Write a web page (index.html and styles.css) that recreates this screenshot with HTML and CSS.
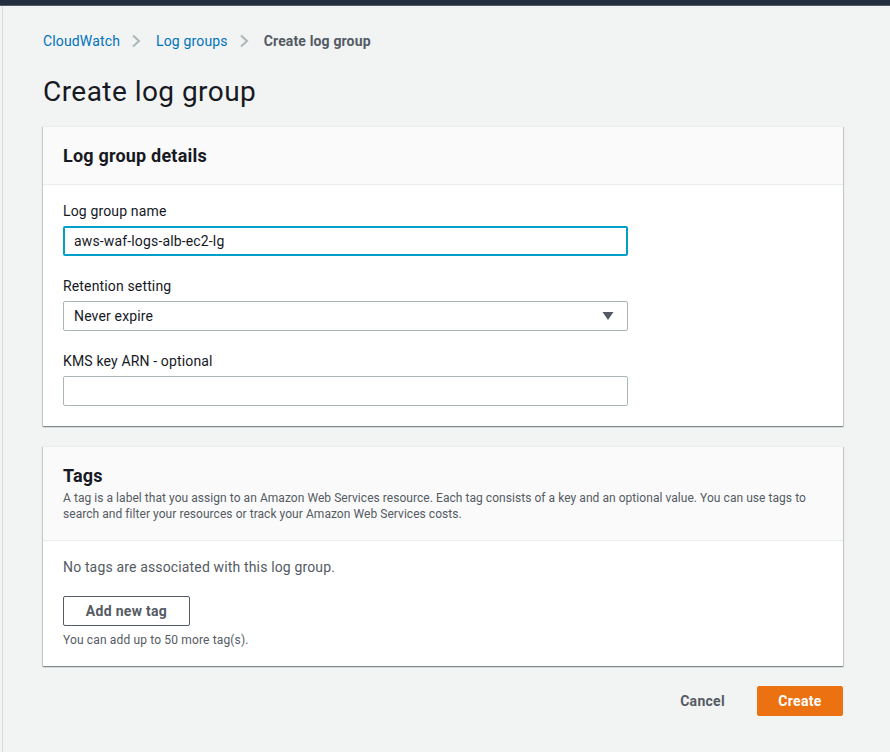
FILE: index.html
```html
<!DOCTYPE html>
<html lang="en">
<head>
<meta charset="utf-8">
<title>Create log group</title>
<link rel="stylesheet" href="styles.css">
</head>
<body>
<div class="topbar"></div>
<div class="page">
  <div class="content">
    <nav class="breadcrumbs">
      <a class="crumb" href="#">CloudWatch</a>
      <svg class="chev" width="10" height="14" viewBox="0 0 10 14"><path d="M2 1.5 L8 7 L2 12.5" fill="none" stroke="#aab7b8" stroke-width="2"/></svg>
      <a class="crumb" href="#">Log groups</a>
      <svg class="chev" width="10" height="14" viewBox="0 0 10 14"><path d="M2 1.5 L8 7 L2 12.5" fill="none" stroke="#aab7b8" stroke-width="2"/></svg>
      <span class="crumb current">Create log group</span>
    </nav>
    <h1 class="title">Create log group</h1>

    <section class="card">
      <div class="card-header">
        <h2 class="card-title">Log group details</h2>
      </div>
      <div class="card-body details">
        <div class="field">
          <label class="label">Log group name</label>
          <div class="input focused">aws-waf-logs-alb-ec2-lg</div>
        </div>
        <div class="field">
          <label class="label">Retention setting</label>
          <div class="input select">
            <span>Never expire</span>
            <svg class="caret" width="12" height="10" viewBox="0 0 12 10"><path d="M0.5 1 L11.5 1 L6 9 Z" fill="#545b64"/></svg>
          </div>
        </div>
        <div class="field">
          <label class="label">KMS key ARN - optional</label>
          <div class="input"></div>
        </div>
      </div>
    </section>

    <section class="card">
      <div class="card-header tags-header">
        <h2 class="card-title">Tags</h2>
        <p class="card-desc">A tag is a label that you assign to an Amazon Web Services resource. Each tag consists of a key and an optional value. You can use tags to search and filter your resources or track your Amazon Web Services costs.</p>
      </div>
      <div class="card-body tags-body">
        <p class="empty">No tags are associated with this log group.</p>
        <button class="btn-normal">Add new tag</button>
        <p class="hint">You can add up to 50 more tag(s).</p>
      </div>
    </section>

    <div class="actions">
      <button class="btn-link">Cancel</button>
      <button class="btn-primary">Create</button>
    </div>
  </div>
</div>
</body>
</html>
```
FILE: styles.css
```css
* { box-sizing: border-box; }
html, body {
  margin: 0;
  padding: 0;
  height: 100%;
}
body {
  background: #f2f3f3;
  font-family: Roboto, "Open Sans", Arial, sans-serif;
  color: #16191f;
  font-size: 14px;
  letter-spacing: 0.15px;
  overflow: hidden;
}
.topbar {
  height: 6px;
  background: #232f3e;
  border-bottom: 1px solid #545b64;
}
.page {
  border-left: 1px solid #d5dbdb;
  margin-left: 2px;
  min-height: calc(100% - 6px);
}
.content {
  padding: 0 47px 0 40px;
  display: flex;
  flex-direction: column;
}
.breadcrumbs {
  display: flex;
  align-items: center;
  gap: 11px;
  height: 20px;
  margin-top: 25px;
}
.crumb {
  font-size: 14px;
  line-height: 20px;
  color: #0073bb;
  text-decoration: none;
}
.crumb.current {
  color: #545b64;
  font-weight: 700;
}
.chev { display: block; margin: 0 4px 0 0; }
.title {
  margin: 23px 0 0;
  font-size: 28px;
  line-height: 36px;
  font-weight: 400;
  letter-spacing: 0.45px;
  color: #16191f;
}
.card {
  margin-top: 16px;
  background: #fff;
  box-shadow: 0 1px 1px 0 rgba(0,28,36,.3), 1px 1px 1px 0 rgba(0,28,36,.15), -1px 1px 1px 0 rgba(0,28,36,.15);
  border-top: 1px solid #eaeded;
}
.card + .card { margin-top: 20px; }
.card-header {
  background: #fafafa;
  border-bottom: 1px solid #eaeded;
  padding: 18px 20px 16px;
  height: 58px;
}
.card-title {
  margin: 0;
  font-size: 18px;
  line-height: 22px;
  font-weight: 700;
  letter-spacing: 0.2px;
  color: #16191f;
}
.tags-header {
  height: 94px;
  padding-top: 18px;
}
.card-desc {
  margin: 3px 0 0;
  font-size: 12px;
  line-height: 16px;
  letter-spacing: 0.05px;
  color: #545b64;
}
.card-body {
  padding: 16px 20px 20px;
}
.details {
  display: flex;
  flex-direction: column;
  gap: 20px;
  padding-top: 16px;
}
.field {
  display: flex;
  flex-direction: column;
  gap: 5px;
}
.label {
  font-size: 14px;
  line-height: 20px;
  color: #16191f;
}
.input {
  width: 565px;
  height: 30px;
  border: 1px solid #aab7b8;
  border-radius: 2px;
  padding: 0 10px;
  font-size: 14px;
  line-height: 28px;
  color: #16191f;
  background: #fff;
}
.input.focused {
  border: 2px solid #00a1c9;
  line-height: 26px;
  padding: 0 9px;
}
.select {
  display: flex;
  align-items: center;
  justify-content: space-between;
  padding-right: 13px;
}
.caret { display: block; }
.tags-body {
  padding-top: 16px;
  padding-bottom: 18px;
}
.empty {
  margin: 0;
  font-size: 14px;
  line-height: 20px;
  color: #545b64;
}
.btn-normal {
  margin-top: 19px;
  display: block;
  height: 30px;
  width: 127px;
  padding: 0;
  white-space: nowrap;
  background: #fff;
  border: 1px solid #545b64;
  border-radius: 2px;
  font-family: inherit;
  font-size: 14px;
  font-weight: 700;
  letter-spacing: 0.3px;
  color: #545b64;
}
.hint {
  margin: 6px 0 0;
  font-size: 12px;
  line-height: 16px;
  color: #545b64;
}
.actions {
  display: flex;
  justify-content: flex-end;
  align-items: center;
  gap: 16px;
  margin-top: 20px;
}
.btn-link, .btn-primary {
  font-family: inherit;
  font-size: 14px;
  font-weight: 700;
  letter-spacing: 0.3px;
  height: 30px;
  border-radius: 2px;
  padding: 0 15px;
  border: 1px solid transparent;
  white-space: nowrap;
}
.btn-link {
  background: transparent;
  color: #545b64;
}
.btn-primary {
  width: 86px;
  background: #ec7211;
  border-color: #ec7211;
  color: #fff;
}
```
